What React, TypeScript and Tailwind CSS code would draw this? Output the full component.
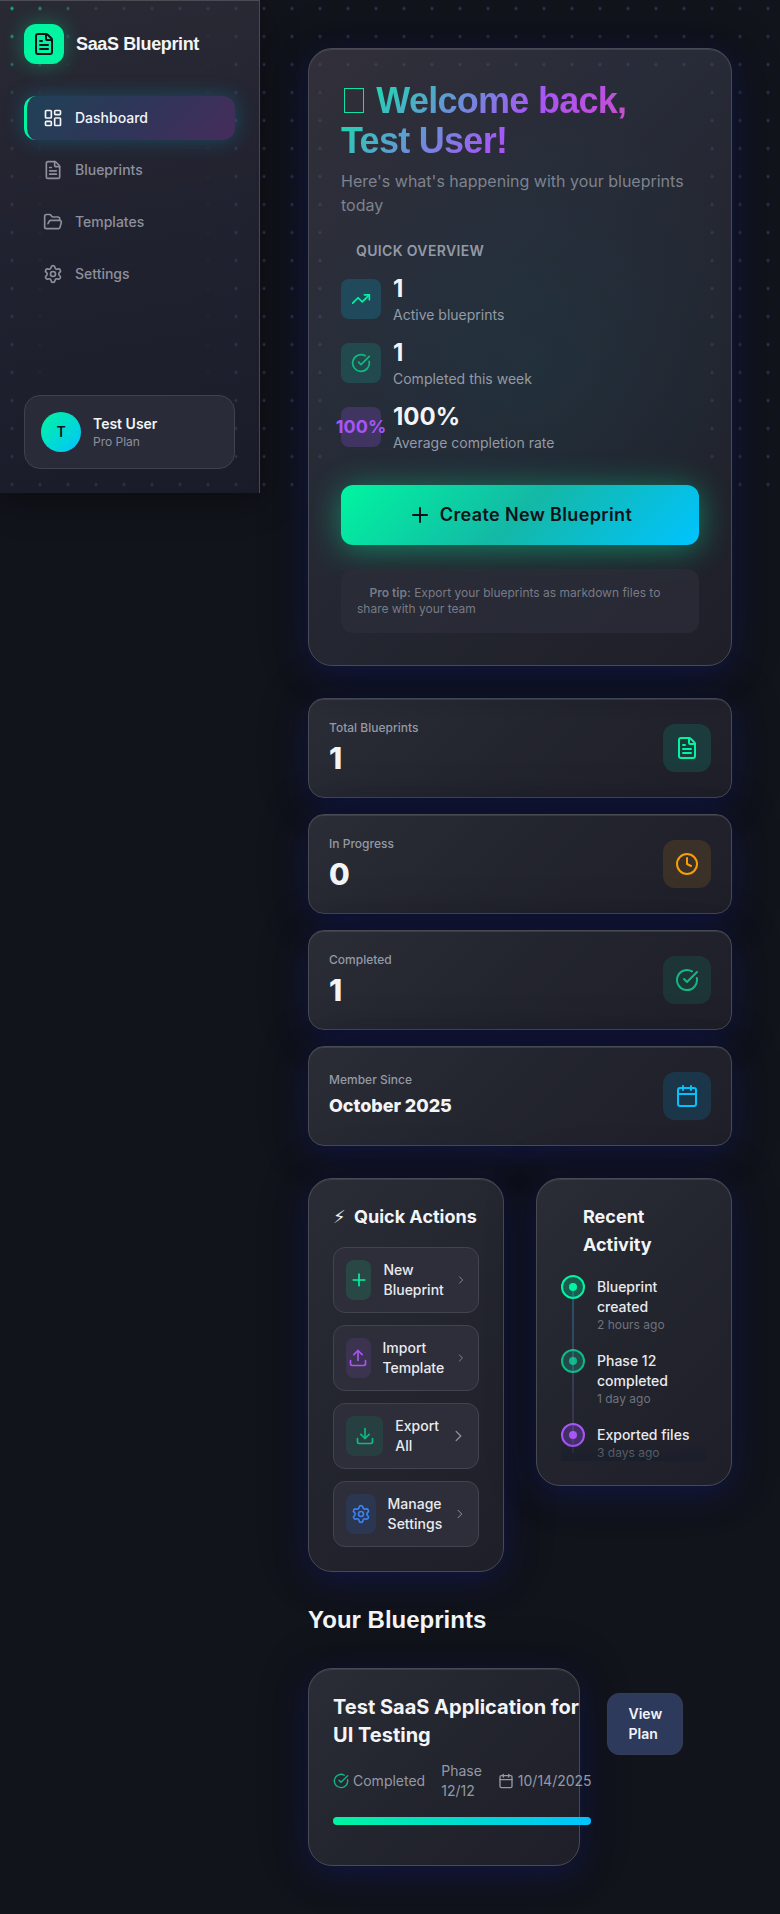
import type { ReactNode } from "react";
import {
  Calendar,
  CircleCheckBig,
  Clock,
  Download,
  FileText,
  FolderOpen,
  LayoutDashboard,
  Plus,
  Settings,
  TrendingUp,
  Upload,
} from "lucide-react";

const glass =
  "border border-[#474a53] bg-linear-135 from-[#2a2c36] via-[#22242e] to-[#1f1f29] shadow-[0_8px_32px_rgba(27,32,140,0.36),0_0_50px_rgba(8,8,12,0.3),inset_0_1px_0_rgba(255,255,255,0.1)]";

const navItems = [
  { label: "Blueprints", icon: <FileText size={20} /> },
  { label: "Templates", icon: <FolderOpen size={20} /> },
  { label: "Settings", icon: <Settings size={20} /> },
];

function Sidebar() {
  return (
    <aside className="relative flex h-[493px] w-[260px] shrink-0 flex-col border-r border-[#474a55] bg-[linear-gradient(170deg,#292a34_0%,#21222f_45%,#1d1f2d_75%,#191b28_100%)] p-6 shadow-[0_8px_32px_rgba(0,0,0,0.4),inset_0_1px_0_rgba(255,255,255,0.16)]">
      <div className="pointer-events-none absolute inset-0 bg-[radial-gradient(circle_at_center,rgba(90,96,140,0.3)_1.2px,transparent_1.9px)] bg-[length:28px_28px] bg-[position:-2px_-5.5px] mask-[linear-gradient(to_right,black_20px,rgba(0,0,0,0.3)_40px,transparent_50px,transparent_200px,rgba(0,0,0,0.3)_210px,black_230px),linear-gradient(to_bottom,black_14px,transparent_40px,transparent_470px,black_478px)]" />
      <div className="pointer-events-none absolute inset-0 bg-[radial-gradient(circle_at_center,rgba(0,245,160,0.7)_1.2px,transparent_1.9px)] bg-[length:28px_28px] bg-[position:-2px_-5.5px] mask-[radial-gradient(circle_at_0_0,black_10px,transparent_100px)]" />
      <div className="relative flex items-center gap-3">
        <div className="flex size-10 items-center justify-center rounded-xl bg-[#00f5a0] text-[#0f1218] shadow-[0_0_20px_rgba(0,245,160,0.35)]">
          <FileText size={24} />
        </div>
        <span className="font-['Liberation_Sans',sans-serif] text-lg font-bold tracking-[-0.02em] text-[#f3f4f6]">SaaS Blueprint</span>
      </div>
      <nav className="relative mt-8 flex flex-col gap-2 text-sm font-medium text-[#8d909c]">
        <a className="flex h-11 items-center gap-3 rounded-xl border-l-3 border-[#00f5a0] bg-linear-135 from-[#1e4156] via-[#2f3559] to-[#452c5b] px-4 text-[#f3f4f6] shadow-[0_0_20px_rgba(0,195,255,0.25)]">
          <LayoutDashboard size={20} />
          Dashboard
        </a>
        {navItems.map((item) => (
          <a key={item.label} className="flex h-11 items-center gap-3 border-l-3 border-transparent px-4">
            {item.icon}
            {item.label}
          </a>
        ))}
      </nav>
      <div className="relative mt-auto flex items-center gap-3 rounded-2xl border border-[#3f424d] bg-[#2b2d3a]/90 p-4">
        <div className="flex size-10 items-center justify-center rounded-full bg-[linear-gradient(135deg,#00f5a0,#00c3ff)] text-sm font-semibold text-[#0f1218]">T</div>
        <div>
          <div className="text-sm leading-[19px] font-semibold text-[#f3f4f6]">Test User</div>
          <div className="text-xs leading-[17px] text-[#8d909c]">Pro Plan</div>
        </div>
      </div>
    </aside>
  );
}

function Overview({ tile, icon, value, label }: { tile: string; icon: ReactNode; value: string; label: string }) {
  return (
    <div className="flex items-center gap-3">
      <div className={`flex size-10 items-center justify-center rounded-lg ${tile}`}>{icon}</div>
      <div>
        <div className="text-2xl font-bold text-[#f3f4f6]">{value}</div>
        <div className="text-sm text-[#949aa5]">{label}</div>
      </div>
    </div>
  );
}

function Hero() {
  return (
    <section className="relative rounded-3xl border border-[#474a53] bg-[radial-gradient(circle_at_52%_50%,rgba(30,60,72,0.42),transparent_65%),linear-gradient(135deg,#312f3a_0%,#282c38_35%,#22242e_70%,#1f1f29_100%)] p-8 shadow-[0_8px_32px_rgba(27,32,140,0.36),0_0_50px_rgba(8,8,12,0.3),inset_0_1px_0_rgba(255,255,255,0.1)]">
      <div className="pointer-events-none absolute inset-x-0 top-0 h-[430px] bg-[radial-gradient(circle_at_center,rgba(95,100,145,0.3)_1.2px,transparent_1.9px)] bg-[length:28px_28px] bg-[position:-3px_1.5px] mask-[linear-gradient(to_right,black_16px,transparent_24px,transparent_398px,black_403px),linear-gradient(to_bottom,black_22px,transparent_30px)]" />
      <h1 className="relative bg-[linear-gradient(135deg,#00f5a0_0%,#a855f7_50%,#ec4899_100%)] bg-clip-text font-['Liberation_Sans',sans-serif] text-4xl leading-10 font-bold tracking-[-0.02em] text-transparent">
        <span className="mr-[3px] ml-[3px] inline-block h-[25px] w-5 border border-[#12e0aa] align-baseline" /> Welcome back, Test User!
      </h1>
      <p className="mt-2 text-base text-[#7d828d]">Here's what's happening with your blueprints today</p>
      <h2 className="mt-6 pl-[15px] text-sm font-semibold tracking-wide text-[#949aa5] uppercase">Quick Overview</h2>
      <div className="mt-3 flex flex-col gap-3">
        <Overview tile="bg-[#20495c] text-[#00f5a0]" icon={<TrendingUp size={20} />} value="1" label="Active blueprints" />
        <Overview tile="bg-[#22494d] text-[#10b981]" icon={<CircleCheckBig size={20} />} value="1" label="Completed this week" />
        <Overview
          tile="bg-[#403560] text-[#a855f7]"
          icon={<span className="text-lg font-bold">100%</span>}
          value="100%"
          label="Average completion rate"
        />
      </div>
      <button className="mt-8 flex h-15 w-full items-center justify-center gap-2 rounded-xl bg-[linear-gradient(135deg,#00f5a0_0%,#14b8a6_50%,#00c3ff_100%)] text-lg font-semibold tracking-[0.02em] text-[#0f1218] shadow-[0_4px_32px_rgba(0,245,160,0.45)]">
        <Plus size={24} />
        Create New Blueprint
      </button>
      <p className="mt-6 rounded-xl bg-[#2c2e39]/70 p-4 text-xs text-[#777b87]">
        <b className="pl-[12.5px] font-semibold">Pro tip:</b> Export your blueprints as markdown files to share with your team
      </p>
    </section>
  );
}

function Stat({ label, value, small, tile, icon }: { label: string; value: string; small?: boolean; tile: string; icon: ReactNode }) {
  return (
    <div className={`flex h-[100px] items-center justify-between rounded-2xl px-5 ${glass}`}>
      <div>
        <div className="mb-[3px] text-xs leading-[18px] font-medium text-[#949aa5]">{label}</div>
        <div
          className={
            small
              ? "mb-px text-lg leading-7 font-extrabold tracking-[-0.003em] text-[#f3f4f6]"
              : "mb-px text-3xl font-extrabold text-[#f3f4f6]"
          }
        >
          {value}
        </div>
      </div>
      <div className={`flex size-12 items-center justify-center rounded-xl ${tile}`}>{icon}</div>
    </div>
  );
}

const actions = [
  { label: "New Blueprint", tile: "bg-[#294744] text-[#00f5a0]", icon: <Plus size={20} /> },
  { label: "Import Template", tile: "bg-[#3c3351] text-[#a855f7]", icon: <Upload size={20} /> },
  { label: "Export All", tile: "bg-[#283f42] text-[#10b981]", icon: <Download size={20} /> },
  { label: "Manage Settings", tile: "bg-[#2b3750] text-[#3b82f6]", icon: <Settings size={20} /> },
];

const activity = [
  { label: "Blueprint created", time: "2 hours ago", ring: "border-[#00f5a0] bg-[#1c5b50]", dot: "bg-[#00f5a0]" },
  { label: "Phase 12 completed", time: "1 day ago", ring: "border-[#10b981] bg-[#204b4a]", dot: "bg-[#10b981]" },
  { label: "Exported files", time: "3 days ago", ring: "border-[#a855f7] bg-[#432f67]", dot: "bg-[#a855f7]" },
];

export default function App() {
  return (
    <div className="relative flex h-[1914px] w-[780px] items-start overflow-hidden bg-[#11141b] font-[Inter,sans-serif] antialiased">
      <div className="pointer-events-none absolute inset-x-0 top-0 h-[493px] bg-[radial-gradient(circle_at_center,#2e3252_1.2px,transparent_1.9px)] bg-[length:28px_28px] bg-[position:-2px_-5.5px]" />
      <Sidebar />
      <main className="relative w-[520px] px-12 pt-12">
        <Hero />
        <div className="mt-8 flex flex-col gap-4">
          <Stat label="Total Blueprints" value="1" tile="bg-[#1c3b3c] text-[#00f5a0]" icon={<FileText size={24} />} />
          <Stat label="In Progress" value="0" tile="bg-[#3b3129] text-[#f59e0b]" icon={<Clock size={24} />} />
          <Stat label="Completed" value="1" tile="bg-[#1e3538] text-[#10b981]" icon={<CircleCheckBig size={24} />} />
          <Stat label="Member Since" value="October 2025" small tile="bg-[#1c3649] text-[#00c3ff]" icon={<Calendar size={24} />} />
        </div>

        <div className="mt-8 grid grid-cols-2 items-start gap-8">
          <section className={`rounded-3xl p-6 ${glass}`}>
            <h3 className="mb-4 flex text-lg leading-7 font-bold whitespace-nowrap text-[#f3f4f6]">
              <span className="w-[21px] shrink-0 font-['DejaVu_Sans',sans-serif] text-lg leading-7 font-bold">{"\u26A1\uFE0E"}</span>
              Quick Actions
            </h3>
            <div className="flex flex-col gap-3">
              {actions.map((a) => (
                <button key={a.label} className="flex items-center gap-3 rounded-xl border border-[#41434e] bg-[#2d2e3a] p-3 text-left">
                  <span className={`flex h-10 w-10 min-w-0 items-center justify-center rounded-lg ${a.tile}`}>
                    <span className="shrink-0">{a.icon}</span>
                  </span>
                  <span className="flex-1 text-sm font-medium text-[#e9eaee]">{a.label}</span>
                  <svg className="h-4 w-4 min-w-0 text-[#9296a2]" viewBox="0 0 24 24" fill="none" stroke="currentColor" strokeWidth="2" strokeLinecap="round" strokeLinejoin="round">
                    <path d="m8.25 4.5 7.5 7.5-7.5 7.5" />
                  </svg>
                </button>
              ))}
            </div>
          </section>

          <section className={`rounded-3xl p-6 ${glass}`}>
            <h3 className="mb-4 pl-[22px] text-lg leading-7 font-bold text-[#f3f4f6]">Recent Activity</h3>
            <div className="relative flex flex-col gap-4">
              {activity.map((a) => (
                <div key={a.label} className="flex gap-3">
                  <div className={`flex size-6 shrink-0 items-center justify-center rounded-full border-2 ${a.ring}`}>
                    <div className={`size-2 rounded-full ${a.dot}`} />
                  </div>
                  <div className="pt-0.5">
                    <div className="text-sm font-medium text-[#e9eaee]">{a.label}</div>
                    <div className="text-xs text-[#6f737e]">{a.time}</div>
                  </div>
                </div>
              ))}
              <div className="absolute top-4 bottom-2 left-[11px] w-0.5 bg-linear-to-b from-[#00c3ff]/28 to-[#a855f7]/15" />
              <div className="absolute inset-x-0 bottom-0 h-5 bg-linear-to-t from-[#141c2a]/45 to-transparent" />
            </div>
          </section>
        </div>

        <h2 className="mt-8 mb-8 font-['Liberation_Sans',sans-serif] text-2xl font-bold text-[#f3f4f6]">Your Blueprints</h2>

        <article className={`flex h-[198px] w-[272px] items-start gap-4 rounded-3xl p-6 ${glass}`}>
          <div className="w-[258px] shrink-0">
            <h3 className="text-xl leading-7 font-bold text-[#f3f4f6]">Test SaaS Application for UI Testing</h3>
            <div className="mt-3 flex items-center gap-4 text-sm text-[#949aa5]">
              <span className="flex items-center gap-1">
                <CircleCheckBig size={16} className="text-[#10b981]" />
                Completed
              </span>
              <span>Phase 12/12</span>
              <span className="flex items-center gap-1">
                <Calendar size={16} />
                10/14/2025
              </span>
            </div>
            <div className="mt-4 h-2 rounded-full bg-[linear-gradient(90deg,#00f5a0,#00c3ff)]" />
          </div>
          <button className="w-[76px] shrink-0 rounded-xl border border-[#343c58] bg-[#2e3a5c] py-2.5 pr-4 pl-[20.5px] text-left text-sm font-semibold text-[#f3f4f6]">
            View Plan
          </button>
        </article>
      </main>
    </div>
  );
}
